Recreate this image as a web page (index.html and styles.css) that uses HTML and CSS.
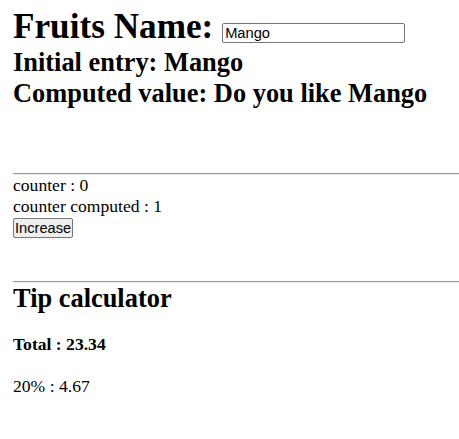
FILE: index.html
```html
<!DOCTYPE html>
<html>
<head>
<meta charset="utf-8">
<link rel="stylesheet" href="styles.css">
</head>
<body>
<div class="page">
  <h1 class="title">Fruits Name: <input class="fruit-input" type="text" value="Mango"></h1>
  <h2 class="line">Initial entry: Mango</h2>
  <h2 class="line">Computed value: Do you like Mango</h2>
  <hr class="rule rule-first">
  <div class="text">counter : 0</div>
  <div class="text">counter computed : 1</div>
  <button class="btn">Increase</button>
  <hr class="rule rule-second">
  <h2 class="tip-title">Tip calculator</h2>
  <h4 class="total">Total : 23.34</h4>
  <p class="tip">20% : 4.67</p>
</div>
</body>
</html>
```
FILE: styles.css
```css
html, body {
  margin: 0;
  padding: 0;
  background: #fff;
  color: #000;
  font-family: "Liberation Serif", "Times New Roman", serif;
  font-size: 17.6px;
  overflow: hidden;
}
.page {
  padding: 7px 0 0 13px;
}
.title {
  font-size: 35.2px;
  font-weight: bold;
  margin: 0;
}
.fruit-input {
  box-sizing: border-box;
  font-family: "Liberation Sans", Arial, sans-serif;
  font-size: 14.67px;
  width: 183px;
  height: 20px;
  padding: 0 2px;
  border: 1px solid #767676;
  border-radius: 2px;
  vertical-align: baseline;
  color: #000;
}
.line {
  font-size: 26.4px;
  margin: 0;
}
.rule {
  border: 0;
  border-top: 1px solid #9a9a9a;
  border-bottom: 1px solid #eeeeee;
  margin: 0;
  height: 0;
}
.rule-first {
  margin-top: 64px;
}
.text {
  font-size: 17.6px;
}
.btn {
  display: block;
  font-family: "Liberation Sans", Arial, sans-serif;
  font-size: 14.67px;
  padding: 1px 1px;
  margin: 1px 0 0;
  border: 1px solid #767676;
  border-radius: 2px;
  background: #efefef;
  color: #000;
}
.rule-second {
  margin-top: 43px;
}
.tip-title {
  font-size: 26.4px;
  margin: 0;
}
.total {
  font-size: 17.6px;
  margin: 20px 0 0;
}
.tip {
  margin: 21px 0 0;
}
```
